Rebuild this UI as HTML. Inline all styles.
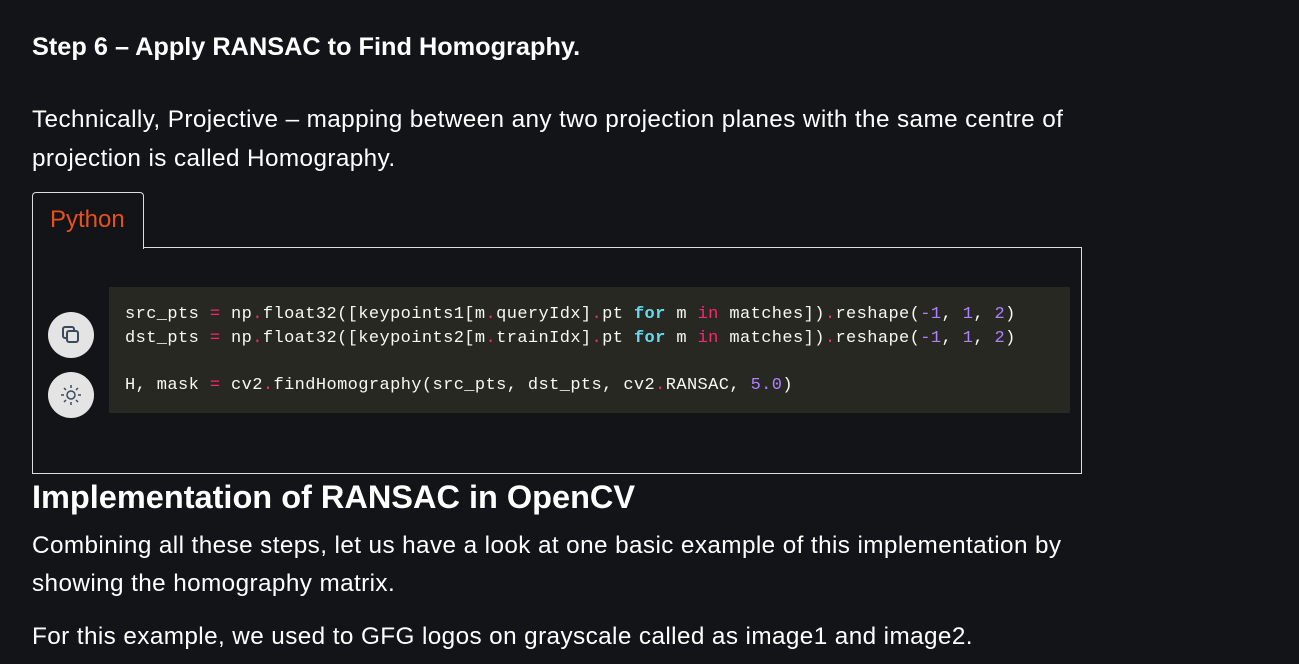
<!DOCTYPE html>
<html><head><meta charset="utf-8"><style>
body{margin:0;background:#131417;color:#fff;font-family:"Liberation Sans",sans-serif;width:1299px;height:664px;overflow:hidden;position:relative}
.t{position:absolute;left:32px;white-space:nowrap;font-size:24.3px;letter-spacing:0.4px}
.code{position:absolute;left:109px;top:287px;width:961px;height:126px;background:#272822;font-family:"Liberation Mono",monospace;font-size:17px;letter-spacing:0.4px;color:#f8f8f2}
.code div{position:absolute;left:16px;white-space:pre}
.o{color:#f92672}.k{color:#66d9ef;font-weight:bold}.n{color:#ae81ff}
.btn{position:absolute;left:48px;width:46px;height:46px;border-radius:50%;background:#e4e4e4}
</style></head><body>
<div class="t" style="top:33px;font-weight:bold;font-size:25.3px;letter-spacing:0">Step 6 – Apply RANSAC to Find Homography.</div>
<div class="t" style="top:106px">Technically, Projective – mapping between any two projection planes with the same centre of</div>
<div class="t" style="top:145px">projection is called Homography.</div>
<div style="position:absolute;left:32px;top:192px;width:110px;height:56px;border:1px solid #ddd;border-bottom:none;border-radius:4px 4px 0 0;background:#131417;z-index:2"></div>
<div style="position:absolute;left:50px;top:206px;font-size:24px;color:#e8501e;z-index:3">Python</div>
<div style="position:absolute;left:32px;top:247px;width:1048px;height:225px;border:1px solid #ddd"></div>
<div class="code">
<div style="top:18px">src_pts <span class="o">=</span> np<span class="o">.</span>float32([keypoints1[m<span class="o">.</span>queryIdx]<span class="o">.</span>pt <span class="k">for</span> m <span class="o">in</span> matches])<span class="o">.</span>reshape(<span class="n">-1</span>, <span class="n">1</span>, <span class="n">2</span>)</div>
<div style="top:42px">dst_pts <span class="o">=</span> np<span class="o">.</span>float32([keypoints2[m<span class="o">.</span>trainIdx]<span class="o">.</span>pt <span class="k">for</span> m <span class="o">in</span> matches])<span class="o">.</span>reshape(<span class="n">-1</span>, <span class="n">1</span>, <span class="n">2</span>)</div>
<div style="top:89px">H, mask <span class="o">=</span> cv2<span class="o">.</span>findHomography(src_pts, dst_pts, cv2<span class="o">.</span>RANSAC, <span class="n">5.0</span>)</div>
</div>
<div class="btn" style="top:312px"><svg width="46" height="46" viewBox="0 0 46 46"><rect x="15" y="15" width="11" height="11" rx="2" fill="none" stroke="#3a4a5a" stroke-width="2"/><rect x="19" y="19" width="11" height="11" rx="2" fill="#e4e4e4" stroke="#3a4a5a" stroke-width="2"/></svg></div>
<div class="btn" style="top:372px"><svg width="46" height="46" viewBox="0 0 46 46" stroke="#3a4a5a" stroke-width="1.5" fill="none"><circle cx="23" cy="23" r="4"/><path d="M23 13v3M23 30v3M13 23h3M30 23h3M16 16l2 2M28 28l2 2M16 30l2-2M28 18l2-2"/></svg></div>
<div class="t" style="top:479px;font-size:32.5px;font-weight:bold;letter-spacing:0">Implementation of RANSAC in OpenCV</div>
<div class="t" style="top:532px">Combining all these steps, let us have a look at one basic example of this implementation by</div>
<div class="t" style="top:570px">showing the homography matrix.</div>
<div class="t" style="top:623px">For this example, we used to GFG logos on grayscale called as image1 and image2.</div>
</body></html>
